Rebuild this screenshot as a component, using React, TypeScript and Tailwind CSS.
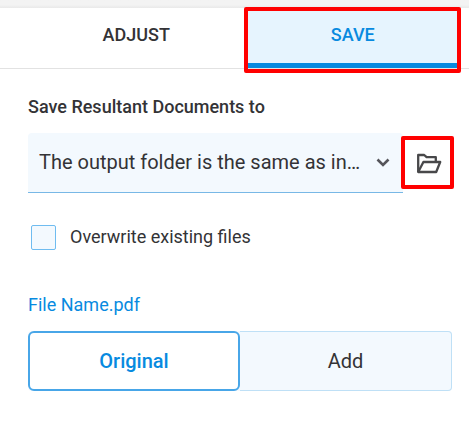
import { useState } from "react";

function FolderOpenIcon() {
  return (
    <svg className="ml-[3px]" width="26" height="23" viewBox="0 0 26 23" fill="none" stroke="#48484a" strokeWidth="2.3" strokeLinejoin="round" aria-hidden="true">
      <path d="M2.2 21V4h6l2.4 2.2h9.2v5" />
      <path d="M2.2 21 7.4 11h16.8l-4 10H2.2Z" />
    </svg>
  );
}

function ChevronIcon() {
  return (
    <svg className="pointer-events-none absolute right-3 top-6" width="16" height="12" viewBox="0 0 16 12" fill="none" stroke="#55555a" strokeWidth="2.6" aria-hidden="true">
      <path d="M2.5 2.5 8 8l5.5-5.5" />
    </svg>
  );
}

const tabs = ["ADJUST", "SAVE"];
const nameModes = ["Original", "Add"];

export default function App() {
  const [tab, setTab] = useState("SAVE");
  const [overwrite, setOverwrite] = useState(false);
  const [mode, setMode] = useState("Original");

  return (
    <div className="min-h-screen bg-white font-[Roboto,sans-serif] text-[#333336]">
      <div className="h-2 bg-gradient-to-b from-[#f3f3f3] from-60% to-[#e9e9e9]" />

      <nav className="flex border-b border-[#e2e2e2] pl-7 pr-2">
        {tabs.map((name) => (
          <div key={name} className="relative flex-1">
            <button
              type="button"
              onClick={() => setTab(name)}
              className={`h-15 w-full border-b-5 pb-0.5 text-lg leading-6 font-medium ${
                tab === name ? "border-[#078ae0] bg-[#e6f4fe] text-[#078ae0]" : "border-transparent"
              }`}
            >
              {name}
            </button>
            {tab === name && <span className="pointer-events-none absolute -bottom-[5px] -left-px -top-px right-0 rounded-xs border-4 border-[#ff0000]" />}
          </div>
        ))}
      </nav>

      <main className="pl-7 pr-[17px] pt-6">
        <label htmlFor="folder" className="block text-lg leading-7 font-medium">
          Save Resultant Documents to
        </label>
        <div className="mt-3 flex items-start">
          <div className="relative min-w-0 flex-1">
            <select
              id="folder"
              className="h-15 w-full appearance-none rounded-t border-b border-[#78b8e6] bg-[#f3f9fe] pb-0.5 pl-[11px] pr-8 text-xl outline-none"
            >
              <option>The output folder is the same as in…</option>
            </select>
            <ChevronIcon />
          </div>
          <button
            type="button"
            aria-label="Choose output folder"
            className="relative -ml-0.5 -mr-0.5 mt-[3px] flex h-[53px] w-[53px] shrink-0 items-center justify-center rounded-xs border-4 border-[#ff0000] bg-white"
          >
            <FolderOpenIcon />
          </button>
        </div>

        <label className="mt-[30px] flex items-center gap-[14px] pl-[3px] text-lg leading-7">
          <input
            type="checkbox"
            checked={overwrite}
            onChange={(e) => setOverwrite(e.target.checked)}
            className="h-[25px] w-[25px] appearance-none rounded-xs border border-solid border-[#6fbcf0] bg-[#f3f9fe] checked:bg-[#078ae0]"
          />
          Overwrite existing files
        </label>

        <a href="#file-name" className="mt-10 block text-lg leading-7 text-[#078ae0]">
          File Name.pdf
        </a>
        <div className="mt-3 grid grid-cols-2 rounded bg-[#f3f9fe]">
          {nameModes.map((name) => (
            <button
              key={name}
              type="button"
              onClick={() => setMode(name)}
              className={`h-15 text-xl ${
                mode === name ? "rounded-md border-2 border-[#48a6e8] bg-white font-medium text-[#078ae0]" : "rounded-r border-y border-r border-[#bfe0f6]"
              }`}
            >
              {name}
            </button>
          ))}
        </div>
      </main>
    </div>
  );
}
